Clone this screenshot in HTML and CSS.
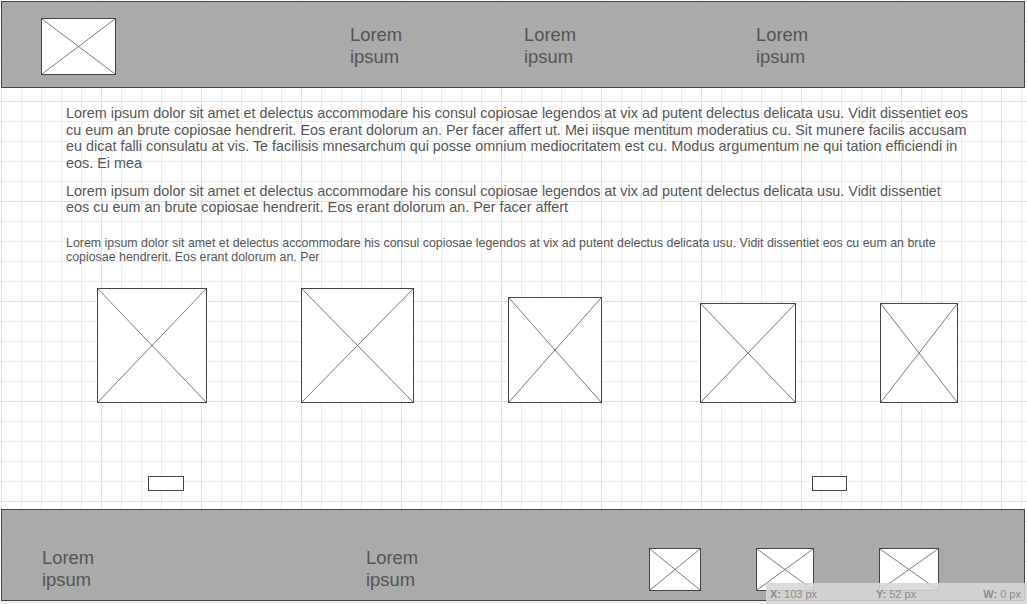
FILE: index.html
```html
<!DOCTYPE html>
<html lang="en">
<head>
<meta charset="utf-8">
<title>Wireframe</title>
<link rel="stylesheet" href="styles.css">
</head>
<body>
<div class="page">
  <header class="topbar">
    <div class="ph logo"><svg viewBox="0 0 100 100" preserveAspectRatio="none"><line x1="0" y1="0" x2="100" y2="100"/><line x1="100" y1="0" x2="0" y2="100"/></svg></div>
    <nav class="nav">
      <span class="nav-item n1">Lorem<br>ipsum</span>
      <span class="nav-item n2">Lorem<br>ipsum</span>
      <span class="nav-item n3">Lorem<br>ipsum</span>
    </nav>
  </header>

  <main class="content">
    <section class="text">
      <p class="p-lg p1">Lorem ipsum dolor sit amet et delectus accommodare his consul copiosae legendos at vix ad putent delectus delicata usu. Vidit dissentiet eos cu eum an brute copiosae hendrerit. Eos erant dolorum an. Per facer affert ut. Mei iisque mentitum moderatius cu. Sit munere facilis accusam eu dicat falli consulatu at vis. Te facilisis mnesarchum qui posse omnium mediocritatem est cu. Modus argumentum ne qui tation efficiendi in eos. Ei mea</p>
      <p class="p-lg p2">Lorem ipsum dolor sit amet et delectus accommodare his consul copiosae legendos at vix ad putent delectus delicata usu. Vidit dissentiet eos cu eum an brute copiosae hendrerit. Eos erant dolorum an. Per facer affert</p>
      <p class="p-sm">Lorem ipsum dolor sit amet et delectus accommodare his consul copiosae legendos at vix ad putent delectus delicata usu. Vidit dissentiet eos cu eum an brute copiosae hendrerit. Eos erant dolorum an. Per</p>
    </section>

    <div class="gallery">
      <div class="ph g1"><svg viewBox="0 0 100 100" preserveAspectRatio="none"><line x1="0" y1="0" x2="100" y2="100"/><line x1="100" y1="0" x2="0" y2="100"/></svg></div>
      <div class="ph g2"><svg viewBox="0 0 100 100" preserveAspectRatio="none"><line x1="0" y1="0" x2="100" y2="100"/><line x1="100" y1="0" x2="0" y2="100"/></svg></div>
      <div class="ph g3"><svg viewBox="0 0 100 100" preserveAspectRatio="none"><line x1="0" y1="0" x2="100" y2="100"/><line x1="100" y1="0" x2="0" y2="100"/></svg></div>
      <div class="ph g4"><svg viewBox="0 0 100 100" preserveAspectRatio="none"><line x1="0" y1="0" x2="100" y2="100"/><line x1="100" y1="0" x2="0" y2="100"/></svg></div>
      <div class="ph g5"><svg viewBox="0 0 100 100" preserveAspectRatio="none"><line x1="0" y1="0" x2="100" y2="100"/><line x1="100" y1="0" x2="0" y2="100"/></svg></div>
    </div>

    <div class="buttons">
      <span class="btn b1"></span>
      <span class="btn b2"></span>
    </div>
  </main>

  <footer class="footbar">
    <span class="f-text ft1">Lorem<br>ipsum</span>
    <span class="f-text ft2">Lorem<br>ipsum</span>
    <div class="ph fi1"><svg viewBox="0 0 100 100" preserveAspectRatio="none"><line x1="0" y1="0" x2="100" y2="100"/><line x1="100" y1="0" x2="0" y2="100"/></svg></div>
    <div class="ph fi2"><svg viewBox="0 0 100 100" preserveAspectRatio="none"><line x1="0" y1="0" x2="100" y2="100"/><line x1="100" y1="0" x2="0" y2="100"/></svg></div>
    <div class="ph fi3"><svg viewBox="0 0 100 100" preserveAspectRatio="none"><line x1="0" y1="0" x2="100" y2="100"/><line x1="100" y1="0" x2="0" y2="100"/></svg></div>
  </footer>
</div>

<div class="status">
  <span class="st sx"><b>X:</b> 103 px</span>
  <span class="st sy"><b>Y:</b> 52 px</span>
  <span class="st sw"><b>W:</b> 0 px</span>
</div>
</body>
</html>
```

FILE: styles.css
```css
html, body {
  margin: 0;
  padding: 0;
}

body {
  background: #efefef;
  font-family: "Liberation Sans", Arial, sans-serif;
  color: #555;
  width: 1027px;
  height: 604px;
  overflow: hidden;
  position: relative;
}

.page {
  padding: 1px 0 0 1px;
  background-color: #fff;
  background-image:
    linear-gradient(to right, #e0e0e0 1px, transparent 1px),
    linear-gradient(to bottom, #e0e0e0 1px, transparent 1px),
    linear-gradient(to right, #ececec 1px, transparent 1px),
    linear-gradient(to bottom, #ececec 1px, transparent 1px);
  background-size: 100px 100px, 100px 100px, 20px 20px, 20px 20px;
  background-position: 1px 1px;
}

/* placeholder boxes */
.ph {
  box-sizing: border-box;
  border: 1px solid #444;
  background: #fff;
  flex: none;
}
.ph svg {
  display: block;
  width: 100%;
  height: 100%;
}
.ph line {
  stroke: #7a7a7a;
  stroke-width: 1;
  vector-effect: non-scaling-stroke;
}

/* header */
.topbar {
  box-sizing: border-box;
  width: 1024px;
  height: 87px;
  border: 1px solid #444;
  background: #aaa;
  display: flex;
  align-items: flex-start;
  padding-left: 39px;
}
.logo {
  width: 75px;
  height: 57px;
  margin-top: 16px;
}
.nav {
  display: flex;
  margin-left: 234px;
  margin-top: 22px;
}
.nav-item {
  font-size: 18.4px;
  line-height: 22px;
  color: #555;
}
.n1 { width: 174px; }
.n2 { width: 232px; }

/* content */
.content {
  height: 421px;
  display: flex;
  flex-direction: column;
}
.text {
  padding-left: 65px;
  width: 905px;
  padding-top: 17px;
}
.text p {
  margin: 0;
}
.p-lg {
  font-size: 14.4px;
  line-height: 16.5px;
}
.p2 {
  margin-top: 11.5px !important;
  width: 892px;
}
.p-sm {
  font-size: 12.4px;
  line-height: 14.25px;
  margin-top: 20px !important;
  color: #555;
}

.gallery {
  display: flex;
  align-items: flex-end;
  padding-left: 96px;
  margin-top: 23.5px;
}
.g1 { width: 110px; height: 115px; }
.g2 { width: 113px; height: 115px; margin-left: 94px; }
.g3 { width: 94px; height: 106px; margin-left: 94px; }
.g4 { width: 96px; height: 100px; margin-left: 98px; }
.g5 { width: 78px; height: 100px; margin-left: 84px; }

.buttons {
  display: flex;
  padding-left: 147px;
  margin-top: 73px;
}
.btn {
  box-sizing: border-box;
  height: 15px;
  border: 1px solid #444;
  background: #fff;
}
.b1 { width: 36px; }
.b2 { width: 35px; margin-left: 628px; }

/* footer */
.footbar {
  box-sizing: border-box;
  width: 1024px;
  height: 92px;
  border: 1px solid #444;
  background: #aaa;
  display: flex;
  align-items: flex-start;
  padding: 37px 0 0 40px;
}
.f-text {
  font-size: 18.4px;
  line-height: 22px;
  color: #555;
}
.ft1 { width: 324px; }
.ft2 { width: 283px; }
.fi1 { width: 52px; height: 43px; margin-top: 1px; }
.fi2 { width: 58px; height: 43px; margin-top: 1px; margin-left: 55px; }
.fi3 { width: 60px; height: 43px; margin-top: 1px; margin-left: 65px; }

/* status overlay */
.status {
  position: absolute;
  left: 766px;
  top: 583px;
  width: 261px;
  height: 21px;
  box-sizing: border-box;
  background: rgba(214, 214, 214, 0.88);
  display: flex;
  align-items: center;
  padding-left: 4px;
  font-size: 11px;
  color: #8c8c8c;
}
.st b {
  font-weight: bold;
}
.sx { width: 106px; }
.sy { width: 106px; }
.sw { flex: 1; text-align: right; padding-right: 6px; }
```
